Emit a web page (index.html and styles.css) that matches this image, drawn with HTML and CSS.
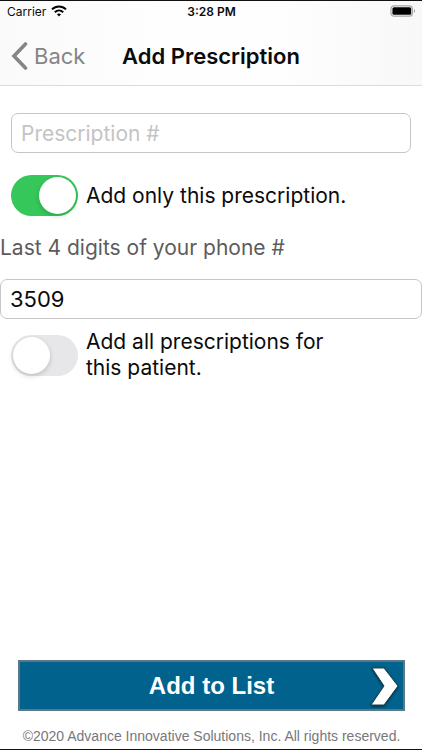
FILE: index.html
```html
<!DOCTYPE html>
<html lang="en">
<head>
<meta charset="utf-8">
<meta name="viewport" content="width=device-width, initial-scale=1">
<title>Add Prescription</title>
<link rel="stylesheet" href="styles.css">
</head>
<body>
<header class="header">
  <div class="status">
    <span class="carrier">Carrier
      <svg class="wifi" viewBox="0 0 16 12" aria-hidden="true"><g fill="none" stroke="#000" stroke-width="2"><path d="M1 4.4C5 .4 11 .4 15 4.4"/><path d="M3.8 7.3c2.4-2.3 6-2.3 8.4 0"/></g><path d="M5.9 9.2c1.2-1.1 3-1.1 4.2 0L8 11.5z"/></svg>
    </span>
    <span class="time">3:28 PM</span>
    <svg class="battery" viewBox="0 0 26 12" aria-hidden="true"><rect x="1" y=".8" width="21.4" height="10.4" rx="3" fill="#fff" stroke="#a5a5a5" stroke-width="1.2"/><rect x="2.4" y="2.2" width="18.8" height="7.6" rx="1.6"/><path d="M24 4.2c1.4.6 1.4 3 0 3.6z" fill="#999"/></svg>
  </div>
  <nav class="navbar">
    <a class="back" href="#"><svg class="chevron" viewBox="0 0 17 28" aria-hidden="true"><path d="M14.500 2 3 14l11.500 12" fill="none" stroke="#858585" stroke-width="3.600" stroke-linecap="round"/></svg>Back</a>
    <h1 class="title">Add Prescription</h1>
  </nav>
</header>
<main class="form">
  <div class="inset"><input class="field" type="text" placeholder="Prescription #" aria-label="Prescription #"></div>
  <label class="option"><input class="switch" type="checkbox" role="switch" checked><span class="option-text">Add only this prescription.</span></label>
  <label class="caption" for="phone">Last 4 digits of your phone #</label>
  <input class="field" id="phone" type="text" inputmode="numeric" value="3509">
  <label class="option option-all"><input class="switch" type="checkbox" role="switch"><span class="option-text">Add all prescriptions for this patient.</span></label>
</main>
<footer class="footer">
  <button class="submit" type="button">Add to List
    <svg class="arrow" viewBox="0 0 36 46" aria-hidden="true"><path d="M5 5h12L31 23 17 42H4L17 23z" fill="#fff" stroke="#24404f" stroke-width="1" stroke-linejoin="round"/></svg>
  </button>
  <p class="copyright">©2020 Advance Innovative Solutions, Inc. All rights reserved.</p>
</footer>
</body>
</html>
```
FILE: styles.css
```css
* {
  box-sizing: border-box;
}

body {
  display: flex;
  flex-direction: column;
  min-height: 100vh;
  margin: 0;
  border-top: 1px solid #111;
  border-bottom: 1px solid #111;
  background: #fff;
  color: #0b0b0b;
  font-family: Inter, "Liberation Sans", sans-serif;
  font-size: 21px;
}

.header {
  border-bottom: 1px solid #dcdcdc;
  background: linear-gradient(90deg, #fafafa, #fefefe 40%, #fefefe 65%, #f8f8f8);
}

.status {
  display: grid;
  grid-template-columns: 1fr auto 1fr;
  align-items: center;
  height: 20px;
  padding: 0 6px 0 7px;
  font-size: 12px;
}

.carrier {
  display: flex;
  align-items: center;
  gap: 5px;
}

.wifi {
  width: 16px;
  height: 12px;
}

.time {
  font-weight: 600;
}

.battery {
  justify-self: end;
  width: 26px;
  height: 12px;
}

.navbar {
  display: grid;
  grid-template-columns: 1fr auto 1fr;
  align-items: center;
  height: 64px;
  padding: 6px 11px 0;
}

.back {
  display: flex;
  align-items: center;
  gap: 6px;
  color: #858585;
  font-size: 22px;
  text-decoration: none;
}

.chevron {
  width: 17px;
  height: 28px;
}

.title {
  margin: 0;
  font-size: 22px;
  font-weight: 600;
}

.form {
  display: flex;
  flex: 1;
  flex-direction: column;
  padding-top: 27px;
}

.inset {
  padding: 0 11px;
}

.field {
  display: block;
  width: 100%;
  height: 40px;
  padding: 0 9px;
  border: 1px solid #c6c6c6;
  border-radius: 7px;
  background: #fff;
  color: #0b0b0b;
  font: inherit;
  font-size: 22px;
}

.field::placeholder {
  color: #c4c4c6;
  font-size: 21px;
  opacity: 1;
}

.option {
  display: flex;
  align-items: center;
  gap: 8px;
  margin-top: 22px;
  padding: 0 11px;
}

.option-all {
  margin-top: 10px;
}

.option-text {
  max-width: 272px;
  line-height: 26px;
}

.switch {
  flex: none;
  width: 67px;
  height: 41px;
  margin: 0;
  padding: 2px;
  border-radius: 21px;
  background: #e7e7e9;
  appearance: none;
}

.switch::before {
  display: block;
  width: 37px;
  height: 37px;
  border-radius: 50%;
  background: #fff;
  box-shadow: 0 2px 5px rgba(0, 0, 0, 0.18);
  content: "";
}

.switch:checked {
  background: #35c759;
}

.switch:checked::before {
  margin-left: auto;
}

.caption {
  margin: 19px 0 18px;
  color: #5c5c5c;
  line-height: 26px;
}

.footer {
  padding: 0 17px 4px 18px;
}

.submit {
  position: relative;
  display: block;
  width: 100%;
  height: 51px;
  padding: 0;
  border: 2px solid #5c7886;
  background: #00628d;
  color: #fff;
  font: bold 24px "Liberation Sans", sans-serif;
}

.arrow {
  position: absolute;
  top: 1px;
  right: 0;
  width: 36px;
  height: 46px;
  filter: drop-shadow(0 1px 1px rgba(0, 0, 0, 0.6));
}

.copyright {
  margin: 16px 0 0;
  color: #77777c;
  font-family: "Liberation Sans", sans-serif;
  font-size: 14px;
  line-height: 18px;
  text-align: center;
}
```
